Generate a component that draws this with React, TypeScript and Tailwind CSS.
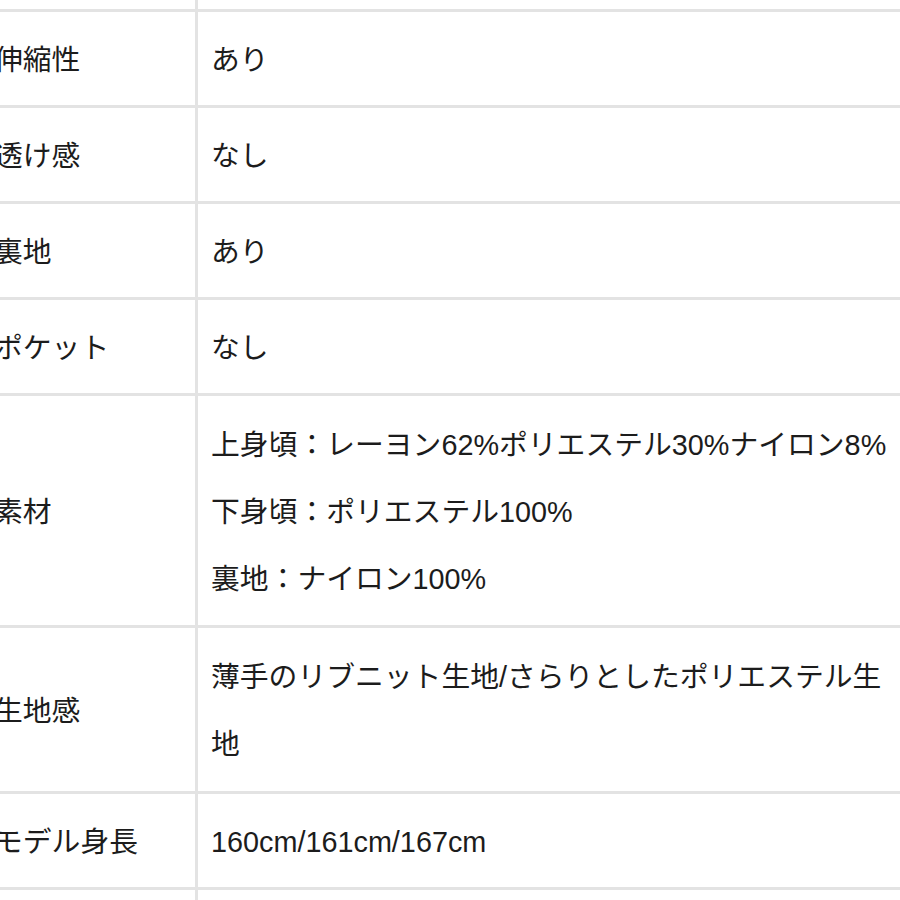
import React from "react";

const font = {
  fontFamily: '"Liberation Sans", "Noto Sans CJK JP", sans-serif',
};

type Row = { label: string; lines: string[]; pad: string };

const rows: Row[] = [
  { label: "伸縮性", lines: ["あり"], pad: "pt-[15px] pb-[11px]" },
  { label: "透け感", lines: ["なし"], pad: "pt-[15px] pb-[11px]" },
  { label: "裏地", lines: ["あり"], pad: "pt-[15px] pb-[11px]" },
  { label: "ポケット", lines: ["なし"], pad: "pt-[15px] pb-[11px]" },
  {
    label: "素材",
    lines: [
      "上身頃：レーヨン62%ポリエステル30%ナイロン8%",
      "下身頃：ポリエステル100%",
      "裏地：ナイロン100%",
    ],
    pad: "pt-[16px] pb-[12px]",
  },
  {
    label: "生地感",
    lines: ["薄手のリブニット生地/さらりとしたポリエステル生", "地"],
    pad: "pt-[16px] pb-[13px]",
  },
  { label: "モデル身長", lines: ["160cm/161cm/167cm"], pad: "pt-[15px] pb-[11px]" },
];

export default function App() {
  return (
    <div
      className="w-[900px] h-[900px] overflow-hidden bg-white text-[#1c1c1c] text-[28.8px]"
      style={font}
    >
      <div className="ml-[-15px] w-[915px]">
        <div className="flex border-b-[3px] border-[#e3e3e3]">
          <div className="w-[213px] h-[9px] shrink-0 border-r-[3px] border-[#e3e3e3]" />
          <div className="flex-1" />
        </div>
        {rows.map((r) => (
          <div
            key={r.label}
            className="flex border-b-[3px] border-[#e3e3e3]"
          >
            <div className="w-[213px] shrink-0 border-r-[3px] border-[#e3e3e3] pl-[9px] pt-[4px] flex items-center whitespace-nowrap">
              {r.label}
            </div>
            <div className={`flex-1 pl-[13px] ${r.pad}`}>
              {r.lines.map((l, i) => (
                <div key={i} className="leading-[67px] whitespace-nowrap">
                  {l}
                </div>
              ))}
            </div>
          </div>
        ))}
        <div className="flex">
          <div className="w-[213px] h-[40px] shrink-0 border-r-[3px] border-[#e3e3e3]" />
          <div className="flex-1" />
        </div>
      </div>
    </div>
  );
}
